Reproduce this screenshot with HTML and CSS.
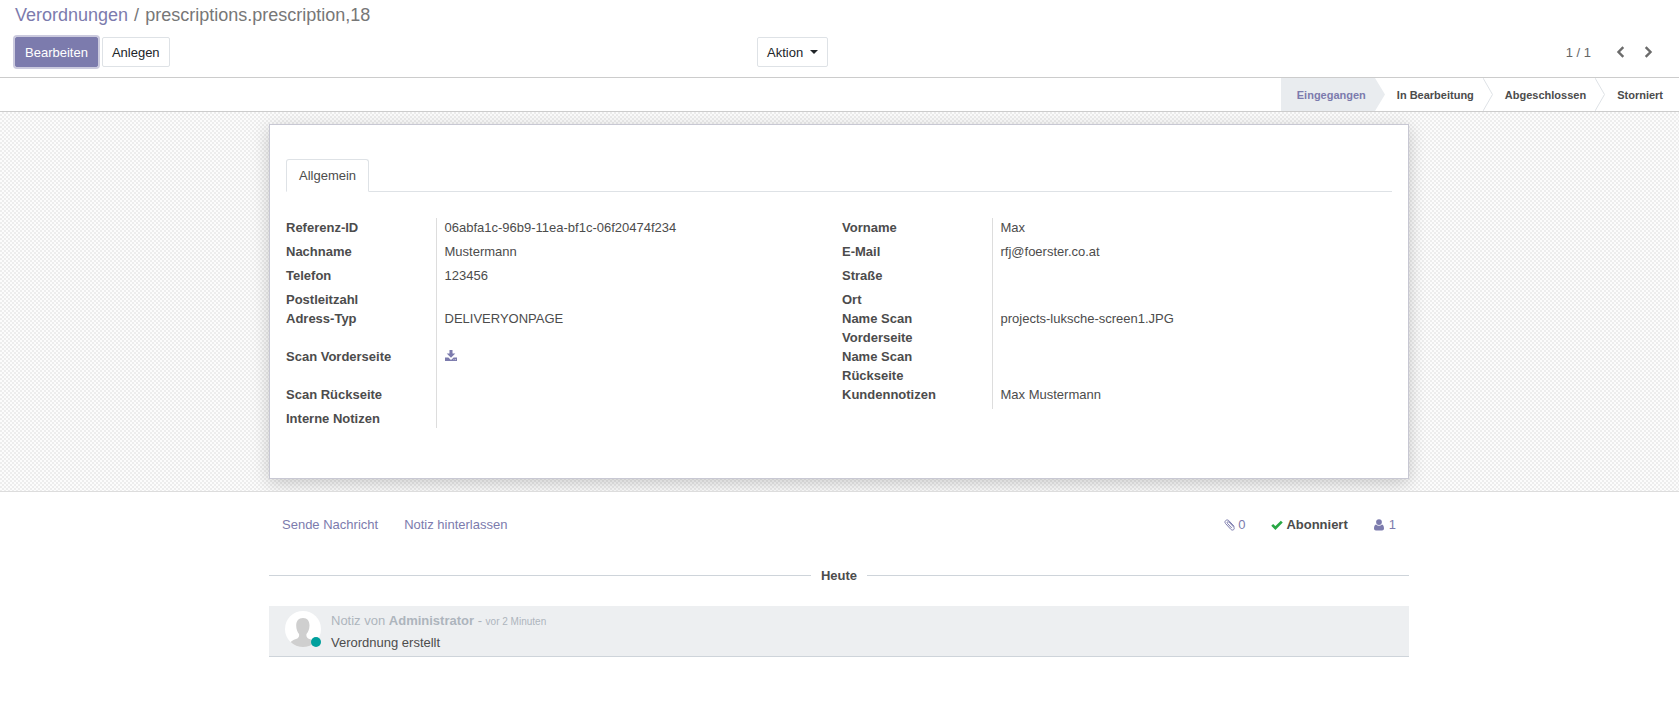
FILE: index.html
```html
<!DOCTYPE html>
<html lang="de">
<head>
<meta charset="utf-8">
<title>Verordnungen</title>
<link rel="stylesheet" href="styles.css">
</head>
<body>
<header class="control-panel">
  <nav class="breadcrumb"><a href="#">Verordnungen</a><span class="slash">/</span><span>prescriptions.prescription,18</span></nav>
  <div class="toolbar">
    <div class="buttons">
      <button class="btn btn-primary" type="button">Bearbeiten</button>
      <button class="btn" type="button">Anlegen</button>
    </div>
    <div><button class="btn btn-action" type="button">Aktion <span class="caret"></span></button></div>
    <div class="pager">
      <span>1 / 1</span>
      <button class="pager-btn" type="button" aria-label="Zurück"><svg width="9" height="12" viewBox="0 0 9 12"><path d="M7.3 1.2 2.5 6l4.8 4.8" fill="none" stroke="#6b6b6b" stroke-width="2.4"/></svg></button>
      <button class="pager-btn" type="button" aria-label="Weiter"><svg width="9" height="12" viewBox="0 0 9 12"><path d="M1.7 1.2 6.5 6 1.7 10.8" fill="none" stroke="#6b6b6b" stroke-width="2.4"/></svg></button>
    </div>
  </div>
</header>

<div class="statusbar">
  <button class="stage stage-active" type="button"><span>Eingegangen</span><svg class="arrow" viewBox="0 0 10 33" preserveAspectRatio="none"><path d="M0 0 10 16.500 0 33z" fill="#e9ecef"/></svg></button>
  <button class="stage" type="button"><span>In Bearbeitung</span><svg class="arrow" viewBox="0 0 10 33" preserveAspectRatio="none"><path d="M0 0 9.500 16.500 0 33" fill="none" stroke="#dee2e6"/></svg></button>
  <button class="stage" type="button"><span>Abgeschlossen</span><svg class="arrow" viewBox="0 0 10 33" preserveAspectRatio="none"><path d="M0 0 9.500 16.500 0 33" fill="none" stroke="#dee2e6"/></svg></button>
  <button class="stage stage-last" type="button"><span>Storniert</span></button>
</div>

<main class="sheet-bg">
  <section class="sheet">
    <div class="tabs"><button class="tab" type="button">Allgemein</button></div>
    <div class="groups">
      <table class="group">
        <tr><th scope="row">Referenz-ID</th><td>06abfa1c-96b9-11ea-bf1c-06f20474f234</td></tr>
        <tr><th scope="row">Nachname</th><td>Mustermann</td></tr>
        <tr><th scope="row">Telefon</th><td>123456</td></tr>
        <tr class="empty"><th scope="row">Postleitzahl</th><td></td></tr>
        <tr class="tall"><th scope="row">Adress-Typ</th><td>DELIVERYONPAGE</td></tr>
        <tr class="tall"><th scope="row">Scan Vorderseite</th><td><a href="#" aria-label="Herunterladen"><svg class="download" width="12" height="12" viewBox="0 0 12 12"><path d="M4.500 0h3v3.500h2.800L6 7.700 1.700 3.500h2.800zM0 7.500h3.400L6 9.900 8.600 7.500H12V11H0z" fill="#7c7bad"/><path d="M8.500 9.600h.8M10.200 9.600h.8" stroke="#fff" stroke-width=".7"/></svg></a></td></tr>
        <tr><th scope="row">Scan Rückseite</th><td></td></tr>
        <tr class="empty"><th scope="row">Interne Notizen</th><td></td></tr>
      </table>
      <table class="group">
        <tr><th scope="row">Vorname</th><td>Max</td></tr>
        <tr><th scope="row">E-Mail</th><td>rfj@foerster.co.at</td></tr>
        <tr><th scope="row">Straße</th><td></td></tr>
        <tr class="empty"><th scope="row">Ort</th><td></td></tr>
        <tr class="empty"><th scope="row">Name Scan Vorderseite</th><td>projects-luksche-screen1.JPG</td></tr>
        <tr class="empty"><th scope="row">Name Scan Rückseite</th><td></td></tr>
        <tr><th scope="row">Kundennotizen</th><td>Max Mustermann</td></tr>
      </table>
    </div>
  </section>
</main>

<section class="chatter">
  <div class="topbar">
    <button class="link" type="button">Sende Nachricht</button>
    <button class="link" type="button">Notiz hinterlassen</button>
    <div class="topbar-right">
      <button class="link icon-link" type="button"><svg width="11" height="12" viewBox="0 0 11 12"><path d="M10 7.200 4.800 1.600C2.800-.3-.3 2.300 1.500 4.500l5.300 5.800c2.100 2 4.500-.3 2.900-2.300L4.900 3c-1.200-1-2.400.3-1.400 1.500l4 4.300" fill="none" stroke="#7c7bad" stroke-width="1" stroke-linecap="round"/></svg>0</button>
      <button class="link icon-link subscribed" type="button"><svg width="12" height="10" viewBox="0 0 12 10"><path d="M1.200 4.900 4.400 8 10.800 1.600" fill="none" stroke="#28a745" stroke-width="2.700"/></svg>Abonniert</button>
      <button class="link icon-link followers" type="button"><svg width="10" height="12" viewBox="0 0 10 12"><circle cx="5" cy="3.100" r="2.900" fill="#7c7bad"/><path d="M2 5.500c1.600 1.600 4.400 1.600 6 0 1.500.4 2 2.200 2 4 0 1.300-.8 2-1.900 2H1.900C.8 11.500 0 10.800 0 9.500c0-1.800.5-3.600 2-4z" fill="#7c7bad"/></svg>1</button>
    </div>
  </div>
  <div class="date-line"><strong>Heute</strong></div>
  <article class="message">
    <div class="avatar">
      <svg width="36" height="36" viewBox="0 0 36 36"><defs><clipPath id="round"><circle cx="18" cy="18" r="18"/></clipPath></defs><g clip-path="url(#round)"><rect width="36" height="36" fill="#fff"/><path d="M18 7c4.500 0 6.500 3 6.500 7.500 0 4-1.500 6.500-3 8.500-.5 2.500.5 4 3 5 3 1 5 2 6 4v5H5v-5c1-2 3-3 6-4 2.500-1 3.500-2.500 3-5-1.500-2-2.800-4.500-2.800-8.500C11.200 10 13.500 7 18 7z" fill="#cfcfcf"/></g></svg>
      <span class="status"></span>
    </div>
    <div>
      <p class="meta">Notiz von <strong>Administrator</strong> - <small>vor 2 Minuten</small></p>
      <p class="body">Verordnung erstellt</p>
    </div>
  </article>
</section>
</body>
</html>
```
FILE: styles.css
```css
* { box-sizing: border-box; }

body {
  margin: 0;
  background: #fff;
  color: #4c4c4c;
  font: 13px/19px "Liberation Sans", Arial, sans-serif;
}

button {
  margin: 0;
  padding: 0;
  border: 0;
  background: none;
  color: inherit;
  font: inherit;
}

a { color: #7c7bad; text-decoration: none; }
svg { display: block; }

.control-panel {
  padding: 3px 15px 10px;
  border-bottom: 1px solid #ccc;
}

.breadcrumb {
  color: #777;
  font-size: 18px;
  line-height: 24px;
}

.slash { padding: 0 6px; }

.toolbar {
  display: grid;
  grid-template-columns: 45% 1fr auto;
  align-items: center;
  margin-top: 10px;
}

.buttons { display: flex; gap: 4px; }

.btn {
  height: 30px;
  padding: 0 9px;
  border: 1px solid #dee2e6;
  border-radius: 2px;
  background: #fff;
  color: #212529;
}

.btn-primary {
  border-color: #7c7bad;
  background: #7c7bad;
  color: #fff;
  box-shadow: 0 0 0 2px #cbcade;
}

.btn-action { display: flex; align-items: center; gap: 7px; }

.caret {
  border: 4px solid transparent;
  border-top-color: #212529;
  border-bottom: 0;
}

.pager {
  display: flex;
  align-items: center;
  padding-right: 1px;
  color: #666;
}

.pager-btn { padding: 0 10px; }
.pager-btn + .pager-btn { padding-left: 9px; }
.pager span { padding-right: 15px; }

.statusbar {
  display: flex;
  justify-content: flex-end;
  height: 34px;
  border-bottom: 1px solid #ccc;
}

.stage {
  display: flex;
  align-items: center;
  gap: 9px;
  padding-left: 12px;
  font-size: 11px;
  font-weight: bold;
}

.stage span { padding-top: 1px; }

.stage-active {
  padding-left: 16px;
  background: linear-gradient(to left, transparent 10px, #e9ecef 10px);
  color: #7c7bad;
}

.stage-last { padding-right: 16px; }
.arrow { width: 10px; height: 100%; }

.sheet-bg {
  overflow: hidden;
  padding: 12px 17px 12px 16px;
  border-bottom: 1px solid #ddd;
  background: repeating-conic-gradient(#ededed 0 25%, #fcfcfc 0 50%) 0 0 / 4px 4px;
}

.sheet {
  max-width: 1140px;
  margin: 0 auto;
  padding: 34px 16px 50px;
  border: 1px solid #c8c8d3;
  background: #fff;
  box-shadow: 0 4px 16px rgba(0, 0, 0, .2);
}

.tabs {
  display: flex;
  border-bottom: 1px solid #dee2e6;
}

.tab {
  height: 33px;
  margin-bottom: -1px;
  padding: 0 12px;
  border: 1px solid #dee2e6;
  border-bottom-color: #fff;
  border-radius: 3px 3px 0 0;
  background: #fff;
}

.groups {
  display: grid;
  grid-template-columns: 1fr 1fr;
  align-items: start;
  gap: 6px;
  margin-top: 26px;
}

.group {
  width: 100%;
  border-collapse: collapse;
  table-layout: fixed;
}

.group th,
.group td {
  height: 24px;
  padding: 0 0 5px;
  text-align: left;
  vertical-align: top;
}

.group th { width: 150px; padding-right: 15px; }
.group td { padding-left: 8px; border-left: 1px solid #ddd; }
.group .empty th, .group .empty td { height: 19px; padding-bottom: 0; }
.group .tall th, .group .tall td { height: 38px; }
.download { margin-top: 3px; }

.chatter {
  max-width: 1141px;
  margin: 0 auto;
  padding-right: 1px;
}

.topbar {
  display: flex;
  gap: 26px;
  padding: 23px 13px 0;
}

.link { color: #7c7bad; }

.topbar-right {
  display: flex;
  gap: 26px;
  margin-left: auto;
}

.icon-link { display: flex; align-items: center; gap: 3px; }
.subscribed { color: #4c4c4c; font-weight: bold; }
.followers { gap: 5px; }

.date-line {
  display: flex;
  align-items: center;
  gap: 10px;
  margin-top: 32px;
}

.date-line::before,
.date-line::after {
  content: "";
  flex: 1;
  border-top: 1px solid #ced4da;
}

.message {
  display: flex;
  gap: 10px;
  margin-top: 21px;
  padding: 5px 16px 3px;
  border-bottom: 1px solid #ced4da;
  background: #edeff1;
}

.avatar { position: relative; width: 36px; height: 42px; }

.status {
  position: absolute;
  right: 0;
  bottom: 6px;
  width: 10px;
  height: 10px;
  border-radius: 50%;
  background: #00a09d;
}

.meta, .body { margin: 0; }
.meta { color: #adb5bd; }
.meta small { font-size: 10px; }
.body { margin-top: 2px; }
```
